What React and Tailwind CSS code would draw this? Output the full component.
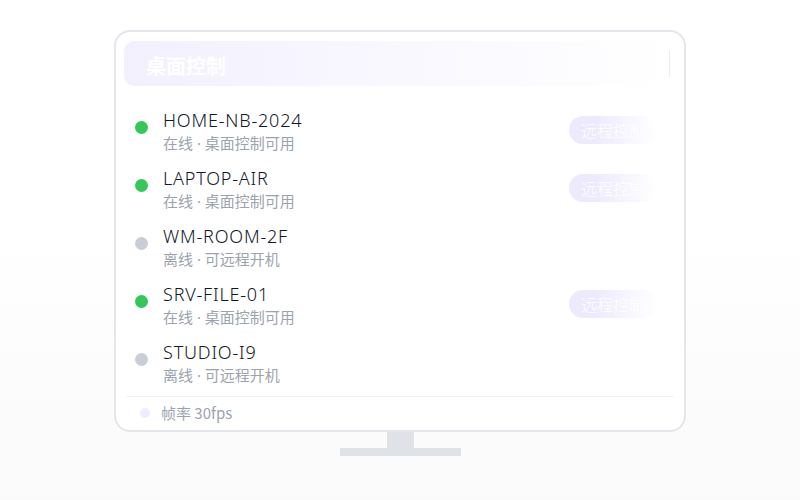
const DEVICES = [
  { name: 'HOME-NB-2024', online: true },
  { name: 'LAPTOP-AIR', online: true },
  { name: 'WM-ROOM-2F', online: false },
  { name: 'SRV-FILE-01', online: true },
  { name: 'STUDIO-I9', online: false },
]

const font = { fontFamily: '"Noto Sans CJK SC", "Noto Sans", sans-serif' }

function Sep() {
  return <span className="font-['Noto_Sans',sans-serif]"> · </span>
}

function Row({ name, online }) {
  return (
    <div className="h-[58px] flex items-center pl-[9px] pr-[17px]">
      <span className={`w-[13px] h-[13px] rounded-full shrink-0 mt-[1px] ${online ? 'bg-[#34c759]' : 'bg-[#c9ced6]'}`} />
      <div className="ml-[15px] flex-1 self-stretch flex flex-col pt-[10px]">
        <span className="font-['Noto_Sans',sans-serif] font-light text-[18px] leading-[24px] tracking-[0.8px] text-[#111827]">{name}</span>
        <span className="text-[15px] leading-[22px] text-[#9ca3af]">
          {online ? <>在线<Sep />桌面控制可用</> : <>离线<Sep />可远程开机</>}
        </span>
      </div>
      {online && (
        <button className="h-[28px] px-[12px] mt-[6px] rounded-full bg-gradient-to-r from-[#eeeafd] from-30% to-white text-white text-[16px] font-light">
          远程控制
        </button>
      )}
    </div>
  )
}

export default function App() {
  return (
    <div className="w-[800px] h-[500px] bg-gradient-to-b from-white from-45% to-[#fafafa] flex flex-col items-center pt-[30px]" style={font}>
      <div className="w-[572px] h-[402px] rounded-[16px] border-2 border-[#e3e6ea] bg-white pt-[9px] px-[8px] flex flex-col">
        <div className="h-[45px] shrink-0 rounded-[10px] bg-gradient-to-r from-[#f3f0fe] to-white flex items-center pl-[22px] pr-[6px]">
          <h1 className="text-[20px] font-bold text-white flex-1 pt-[5px]">桌面控制</h1>
          <div className="flex gap-[10px] mr-[24px]">
            <span className="w-[5px] h-[5px] rounded-full bg-white" />
            <span className="w-[5px] h-[5px] rounded-full bg-white" />
            <span className="w-[5px] h-[5px] rounded-full bg-white" />
          </div>
          <span className="w-px h-[27px] bg-[#e8eaee]" />
        </div>
        <div className="mt-[12px] mx-[2px] flex flex-col">
          {DEVICES.map(d => <Row key={d.name} {...d} />)}
        </div>
        <div className="mt-[8px] mx-[2px] border-t border-[#eef0f3] flex items-center h-[32px] pl-[14px]">
          <span className="w-[10px] h-[10px] rounded-full bg-[#f0ecfe]" />
          <span className="ml-[11px] text-[15px] text-[#9ca3af] pt-[2px]">帧率 30fps</span>
        </div>
      </div>
      <div className="w-[27px] h-[16px] bg-[#dfe3e8]" />
      <div className="w-[121px] h-[8px] bg-[#dfe3e8]" />
    </div>
  )
}
